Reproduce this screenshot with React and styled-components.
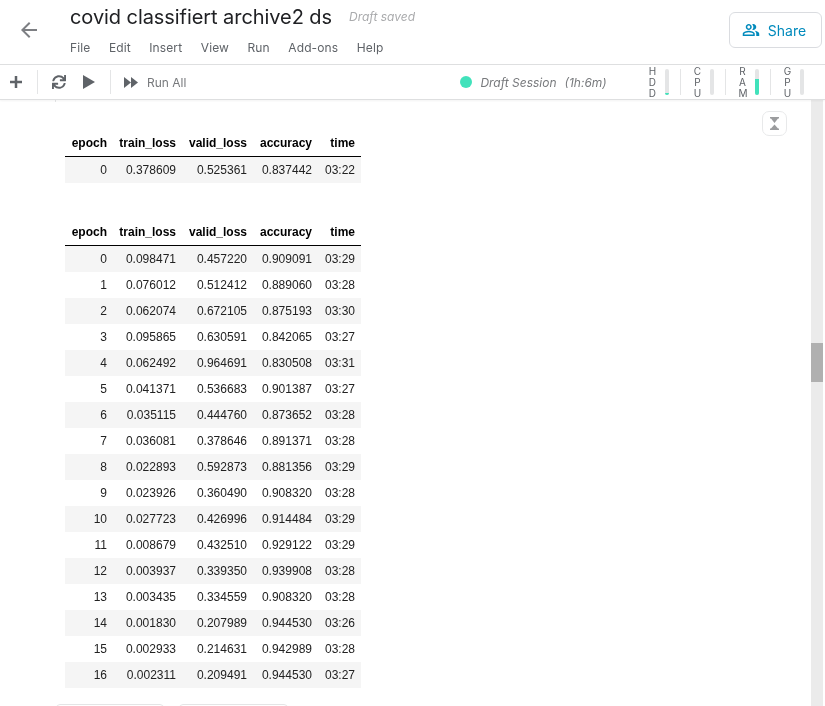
import React from 'react'
import styled, { createGlobalStyle } from 'styled-components'
import { MdArrowBack, MdOutlinePeopleAlt } from 'react-icons/md'
import { FaSync } from 'react-icons/fa'

const GlobalStyle = createGlobalStyle`
  html, body { margin: 0; padding: 0; height: 100%; background: #fff; overflow: hidden; }
  #root { height: 100%; }
`;

const Page = styled.div`
  height: 706px;
  display: flex;
  flex-direction: column;
  font-family: Inter, "Liberation Sans", sans-serif;
  color: #5f6368;
  will-change: transform;
`;

const Header = styled.header`
  height: 64px;
  flex: none;
  display: flex;
  border-bottom: 1px solid #dedfe0;
`;
const BackButton = styled.div`
  width: 70px;
  flex: none;
  display: flex;
  padding: 18px 0 0 17px;
  box-sizing: border-box;
  color: #7d7f83;
  font-size: 24px;
`;
const TitleBlock = styled.div`
  flex: 1;
  padding-top: 5px;
`;
const TitleRow = styled.div`
  display: flex;
  align-items: baseline;
  height: 26px;
`;
const Title = styled.h1`
  margin: 0;
  font-size: 20px;
  line-height: 24px;
  font-weight: 400;
  letter-spacing: -0.07px;
  color: #202124;
`;
const SavedNote = styled.span`
  margin-left: 17px;
  position: relative;
  top: -3px;
  font-size: 12px;
  font-style: italic;
  color: #aaabad;
`;
const Menu = styled.nav`
  display: flex;
  gap: 18.6px;
  margin-top: 9px;
  font-size: 12px;
  line-height: 16px;
  letter-spacing: 0.1px;
  color: #5f6368;
`;
const ShareButton = styled.button`
  width: 93px;
  height: 36px;
  margin: 12px 3px 0 0;
  flex: none;
  display: flex;
  align-items: center;
  justify-content: center;
  gap: 8px;
  padding: 0 3px 0 0;
  background: #fff;
  border: 1px solid #dadce0;
  border-radius: 6px;
  font-family: inherit;
  font-size: 14px;
  color: #008abc;
`;

const Toolbar = styled.div`
  height: 34px;
  flex: none;
  display: flex;
  align-items: center;
  border-bottom: 1px solid #dedfe0;
  box-shadow: 0 1px 2px rgba(0, 0, 0, 0.05);
  position: relative;
  z-index: 1;
  background: #fff;
`;
const ToolIcon = styled.div`
  width: ${p => p.$w}px;
  margin-left: ${p => p.$ml || 0}px;
  flex: none;
  display: flex;
  justify-content: center;
  color: #5f6368;
`;
const ToolDivider = styled.div`
  width: 1px;
  height: 24px;
  flex: none;
  margin-left: ${p => p.$ml}px;
  background: #e4e5e6;
`;
const RunAll = styled.span`
  flex: none;
  white-space: nowrap;
  font-size: 12px;
  color: #77797c;
  margin-left: 9px;
`;
const Session = styled.div`
  flex: none;
  margin-left: 274px;
  width: 176px;
  display: flex;
  align-items: center;
  white-space: nowrap;
  font-size: 12px;
  font-style: italic;
  color: #77797c;
`;
const SessionDot = styled.span`
  width: 12px;
  height: 12px;
  border-radius: 50%;
  background: #41e2bb;
  margin-right: 8px;
`;
const SessionTime = styled.span`
  margin-left: 8px;
`;
const Meters = styled.div`
  flex: none;
  display: flex;
  align-items: center;
`;
const Meter = styled.div`
  width: 45px;
  height: 26px;
  display: flex;
  align-items: center;
  justify-content: flex-end;
  box-sizing: border-box;
  padding-right: 11px;
  gap: 9px;
  border-right: 1px solid ${p => (p.$last ? 'transparent' : '#e4e5e6')};
`;
const MeterLabel = styled.div`
  width: 8px;
  font-size: 10px;
  line-height: 11px;
  text-align: center;
  color: #5f6368;
`;
const MeterTrack = styled.div`
  width: 4px;
  height: 26px;
  border-radius: 2px;
  background: #e4e5e6;
  display: flex;
  align-items: flex-end;
  overflow: hidden;
`;
const MeterFill = styled.div`
  width: 100%;
  background: #41e2bb;
`;

const Body = styled.div`
  flex: 1;
  min-height: 0;
  display: flex;
  position: relative;
`;
const Content = styled.main`
  flex: 1;
  overflow: hidden;
  padding: 30px 0 0 56px;
`;
const CellEdge = styled.div`
  position: absolute;
  top: 0;
  left: 55px;
  width: 1px;
  height: 2px;
  background: #e4e5e6;
`;
const ResultTable = styled.table`
  margin: 0 0 36px 9px;
  border-collapse: separate;
  border-spacing: 0;
  table-layout: fixed;
  width: 296px;
  font-family: "Liberation Sans", Arial, sans-serif;
  font-size: 12px;
  color: #222;

  &:last-of-type {
    margin-bottom: 16px;
  }
  th, td {
    height: 26px;
    padding: 0 6px;
    text-align: right;
    white-space: nowrap;
    box-sizing: border-box;
  }
  thead th {
    height: 27px;
    border-bottom: 1px solid #000;
    font-weight: 700;
    color: #000;
  }
  tbody tr:nth-child(odd) {
    background: #f5f5f5;
  }
  th:nth-child(1) { width: 48px; }
  th:nth-child(2) { width: 69px; }
  th:nth-child(3) { width: 71px; }
  th:nth-child(4) { width: 65px; }
  th:nth-child(5) { width: 43px; }
`;
const ButtonRow = styled.div`
  display: flex;
  gap: 15px;
`;
const OutputButton = styled.div`
  width: ${p => p.$w}px;
  height: 30px;
  box-sizing: border-box;
  border: 1px solid #e4e5e6;
  border-radius: 4px;
`;
const ScrollTrack = styled.div`
  width: 12px;
  margin-right: 2px;
  flex: none;
  background: #ebebeb;
`;
const ScrollThumb = styled.div`
  height: 39px;
  margin-top: 243px;
  background: #b0b0b0;
`;
const CollapseButton = styled.div`
  position: absolute;
  top: 11px;
  left: 762px;
  width: 25px;
  height: 25px;
  box-sizing: border-box;
  border: 1px solid #e8e9ea;
  border-radius: 7px;
  display: flex;
  align-items: center;
  justify-content: center;
  background: #fff;
`;

const firstRun = [[0, '0.378609', '0.525361', '0.837442', '03:22']];
const secondRun = [
  [0, '0.098471', '0.457220', '0.909091', '03:29'],
  [1, '0.076012', '0.512412', '0.889060', '03:28'],
  [2, '0.062074', '0.672105', '0.875193', '03:30'],
  [3, '0.095865', '0.630591', '0.842065', '03:27'],
  [4, '0.062492', '0.964691', '0.830508', '03:31'],
  [5, '0.041371', '0.536683', '0.901387', '03:27'],
  [6, '0.035115', '0.444760', '0.873652', '03:28'],
  [7, '0.036081', '0.378646', '0.891371', '03:28'],
  [8, '0.022893', '0.592873', '0.881356', '03:29'],
  [9, '0.023926', '0.360490', '0.908320', '03:28'],
  [10, '0.027723', '0.426996', '0.914484', '03:29'],
  [11, '0.008679', '0.432510', '0.929122', '03:29'],
  [12, '0.003937', '0.339350', '0.939908', '03:28'],
  [13, '0.003435', '0.334559', '0.908320', '03:28'],
  [14, '0.001830', '0.207989', '0.944530', '03:26'],
  [15, '0.002933', '0.214631', '0.942989', '03:28'],
  [16, '0.002311', '0.209491', '0.944530', '03:27'],
];
const columns = ['epoch', 'train_loss', 'valid_loss', 'accuracy', 'time'];
const menuItems = ['File', 'Edit', 'Insert', 'View', 'Run', 'Add-ons', 'Help'];
const meters = [
  { label: 'HDD', level: 6 },
  { label: 'CPU', level: 0 },
  { label: 'RAM', level: 61 },
  { label: 'GPU', level: 0 },
];

const Results = ({ rows }) => (
  <ResultTable>
    <thead>
      <tr>{columns.map(c => <th key={c}>{c}</th>)}</tr>
    </thead>
    <tbody>
      {rows.map(r => (
        <tr key={r[0]}>{r.map((v, i) => <td key={i}>{v}</td>)}</tr>
      ))}
    </tbody>
  </ResultTable>
);

const App = () => (
  <Page>
    <GlobalStyle />
    <Header>
      <BackButton><MdArrowBack /></BackButton>
      <TitleBlock>
        <TitleRow>
          <Title>covid classifiert archive2 ds</Title>
          <SavedNote>Draft saved</SavedNote>
        </TitleRow>
        <Menu>{menuItems.map(m => <span key={m}>{m}</span>)}</Menu>
      </TitleBlock>
      <ShareButton><MdOutlinePeopleAlt size={18} />Share</ShareButton>
    </Header>
    <Toolbar>
      <ToolIcon $w={12} $ml={10}>
        <svg width="12" height="12" viewBox="0 0 12 12" fill="currentColor">
          <path d="M4.75 0h2.5v4.75H12v2.5H7.25V12h-2.5V7.25H0v-2.5h4.75z" />
        </svg>
      </ToolIcon>
      <ToolDivider $ml={15} />
      <ToolIcon $w={14} $ml={14}><FaSync size={14} /></ToolIcon>
      <ToolIcon $w={12} $ml={17}>
        <svg width="12" height="14" viewBox="0 0 12 14" fill="currentColor">
          <path d="M0 0l12 7L0 14z" />
        </svg>
      </ToolIcon>
      <ToolDivider $ml={15} />
      <ToolIcon $w={14} $ml={13}>
        <svg width="14" height="11" viewBox="0 0 14 11" fill="currentColor">
          <path d="M0 0l7 5.5L0 11z" />
          <path d="M7 0l7 5.5L7 11z" />
        </svg>
      </ToolIcon>
      <RunAll>Run All</RunAll>
      <Session>
        <SessionDot />
        Draft Session
        <SessionTime>(1h:6m)</SessionTime>
      </Session>
      <Meters>
        {meters.map((m, i) => (
          <Meter key={m.label} $last={i === meters.length - 1}>
            <MeterLabel>{m.label.split('').map((c, j) => <div key={j}>{c}</div>)}</MeterLabel>
            <MeterTrack><MeterFill style={{ height: `${m.level}%` }} /></MeterTrack>
          </Meter>
        ))}
      </Meters>
    </Toolbar>
    <Body>
      <CellEdge />
      <Content>
        <Results rows={firstRun} />
        <Results rows={secondRun} />
        <ButtonRow>
          <OutputButton $w={108} />
          <OutputButton $w={109} />
        </ButtonRow>
      </Content>
      <ScrollTrack><ScrollThumb /></ScrollTrack>
      <CollapseButton>
        <svg width="9" height="13" viewBox="0 0 9 13" fill="#9b9c9e">
          <path d="M0 0h9v1.5H8L4.5 6 1 1.5H0z" />
          <path d="M4.5 7.5L8 11.5h1V13H0v-1.5h1z" />
        </svg>
      </CollapseButton>
    </Body>
  </Page>
)

export default App
